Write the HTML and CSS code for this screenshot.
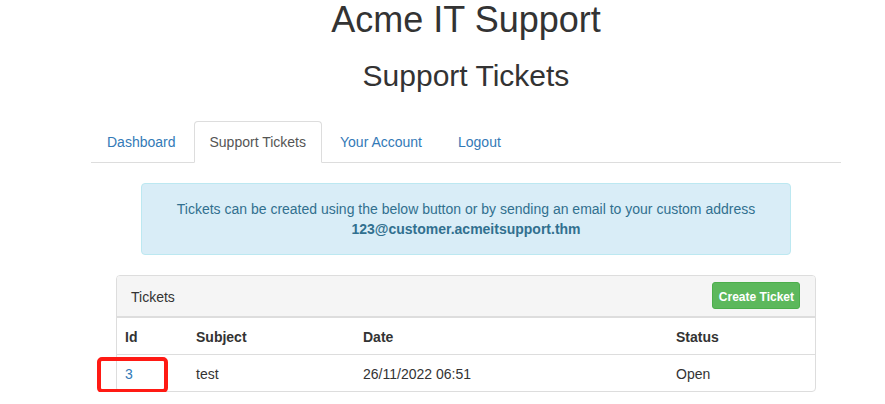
FILE: index.html
```html
<!DOCTYPE html>
<html>
<head>
<meta charset="utf-8">
<link rel="stylesheet" href="styles.css">
</head>
<body>
<div class="page">
  <h1 class="title">Acme IT Support</h1>
  <h2 class="subtitle">Support Tickets</h2>
  <ul class="tabs">
    <li><a href="#">Dashboard</a></li>
    <li class="active"><a href="#">Support Tickets</a></li>
    <li><a href="#">Your Account</a></li>
    <li><a href="#">Logout</a></li>
  </ul>
  <div class="alert">
    Tickets can be created using the below button or by sending an email to your custom address<br>
    <strong>123@customer.acmeitsupport.thm</strong>
  </div>
  <div class="panel">
    <div class="panel-heading">
      <span class="panel-title">Tickets</span>
      <a class="btn" href="#">Create Ticket</a>
    </div>
    <table class="tickets">
      <colgroup>
        <col class="c1"><col class="c2"><col class="c3"><col class="c4">
      </colgroup>
      <thead>
        <tr><th>Id</th><th>Subject</th><th>Date</th><th>Status</th></tr>
      </thead>
      <tbody>
        <tr>
          <td><a href="#">3</a></td>
          <td>test</td>
          <td>26/11/2022 06:51</td>
          <td>Open</td>
        </tr>
      </tbody>
    </table>
    <span class="mark"></span>
  </div>
</div>
</body>
</html>
```
FILE: styles.css
```css
* { box-sizing: border-box; }
html, body { margin: 0; padding: 0; background: #fff; }
body {
  font-family: "Liberation Sans", Arial, Helvetica, sans-serif;
  font-size: 14px;
  line-height: 20px;
  color: #333;
}
a { color: #337ab7; text-decoration: none; }

.page {
  width: 750px;
  margin-left: 91px;
}

.title {
  margin: 0;
  font-size: 36px;
  line-height: 39.6px;
  font-weight: 500;
  text-align: center;
}
.subtitle {
  margin: 19px 0 0;
  font-size: 30px;
  line-height: 33px;
  font-weight: 500;
  text-align: center;
}

.tabs {
  list-style: none;
  margin: 29px 0 0;
  padding: 0;
  display: flex;
  border-bottom: 1px solid #ddd;
}
.tabs li { margin-bottom: -1px; }
.tabs a {
  display: block;
  padding: 10px 15px;
  margin-right: 2px;
  line-height: 20px;
  border: 1px solid transparent;
  border-radius: 4px 4px 0 0;
}
.tabs li:nth-child(3) a { margin-right: 4px; }
.tabs .active a {
  color: #555;
  background: #fff;
  border-color: #ddd;
  border-bottom-color: transparent;
}

.alert {
  width: 650px;
  margin: 20px auto 0;
  padding: 15px;
  background: #d9edf7;
  border: 1px solid #bce8f1;
  border-radius: 4px;
  color: #31708f;
  text-align: center;
}
.alert strong { font-weight: 700; }

.panel {
  position: relative;
  width: 700px;
  margin: 20px auto 0;
  border: 1px solid #ddd;
  border-radius: 4px;
}
.panel-heading {
  display: flex;
  justify-content: space-between;
  align-items: center;
  padding: 7px 15px;
  background: #f5f5f5;
  border-bottom: 2px solid #ddd;
  border-radius: 3px 3px 0 0;
  height: 42px;
}
.panel-title { position: relative; top: 1px; left: -1px; }
.btn {
  display: inline-block;
  background: #5cb85c;
  border: 1px solid #4cae4c;
  color: #fff;
  font-size: 12px;
  font-weight: 700;
  line-height: 18px;
  padding: 5px 5px 2px 6px;
  border-radius: 3px;
}

.tickets {
  width: 100%;
  border-collapse: collapse;
}
.c1 { width: 71px; }
.c2 { width: 167px; }
.c3 { width: 313px; }
.c4 { width: auto; }
.tickets th, .tickets td {
  padding: 9px 8px 7px;
  line-height: 20px;
  text-align: left;
}
.tickets th {
  font-weight: 700;
  border-bottom: 1px solid #ddd;
}
.mark {
  position: absolute;
  left: -20px;
  top: 81px;
  width: 71px;
  height: 36px;
  border: 4px solid #ff1a14;
  border-radius: 5px;
}
```
